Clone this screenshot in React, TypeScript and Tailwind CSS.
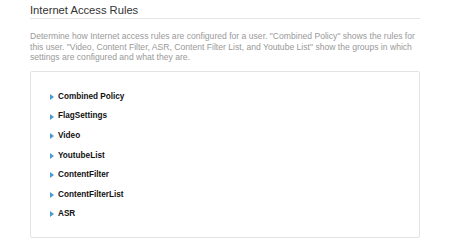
import React from "react";

const groups = [
  "Combined Policy",
  "FlagSettings",
  "Video",
  "YoutubeList",
  "ContentFilter",
  "ContentFilterList",
  "ASR",
];

const Arrow = () => (
  <svg width="4" height="6" viewBox="0 0 4 6" className="shrink-0">
    <path d="M0 0 L4 3 L0 6 Z" fill="#4a9bd1" />
  </svg>
);

export default function App() {
  return (
    <div
      className="w-[450px] h-[248px] bg-white pl-[30px] pt-[4px]"
      style={{ fontFamily: '"Liberation Sans", Arial, sans-serif' }}
    >
      <div className="w-[390px]">
        {/* Header */}
        <h2 className="text-[11.2px] leading-[13px] text-[#333] pb-[1px] border-b border-[#e5e5e5]">
          Internet Access Rules
        </h2>

        <p className="mt-[12px] text-[8.6px] leading-[10.7px] text-[#999]">
          Determine how Internet access rules are configured for a user. "Combined Policy" shows the rules for
          this user. "Video, Content Filter, ASR, Content Filter List, and Youtube List" show the groups in which
          settings are configured and what they are.
        </p>

        {/* Groups */}
        <div className="mt-[8px] border border-[#e3e3e3] rounded-[2px] pt-[15px] pb-[13px] pl-[19px]">
          {groups.map((g) => (
            <div key={g} className="h-[19.6px] flex items-center gap-[4px] cursor-pointer">
              <Arrow />
              <span className="text-[8.2px] font-bold text-[#111]">{g}</span>
            </div>
          ))}
        </div>
      </div>
    </div>
  );
}
